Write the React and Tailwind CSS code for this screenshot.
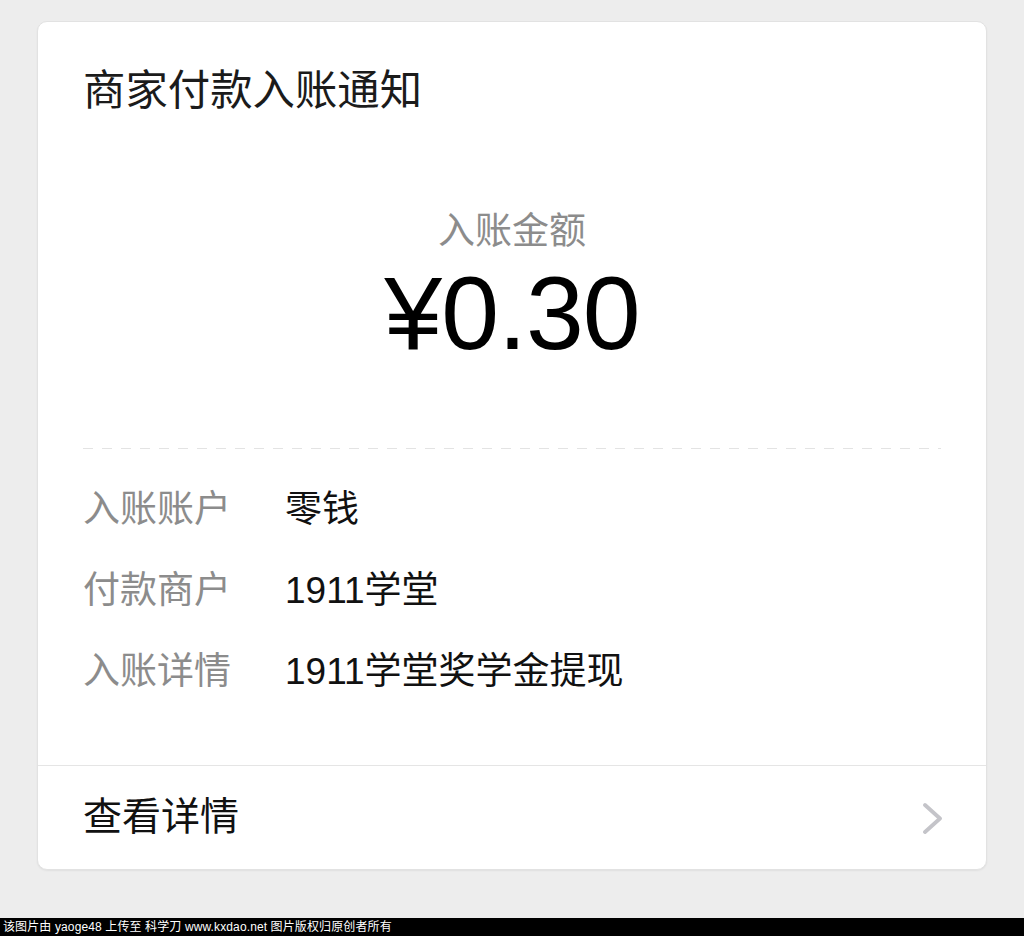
import React from 'react';

const CJK = { fontFamily: '"Liberation Sans", "Noto Sans CJK SC", sans-serif' };

const ROWS = [
  { label: '入账账户', value: '零钱' },
  { label: '付款商户', value: '1911学堂' },
  { label: '入账详情', value: '1911学堂奖学金提现' },
];

const App = () => {
  return (
    <div className="min-h-[936px] bg-[#ededed] flex flex-col" style={CJK}>
      {/* Notification card */}
      <div className="mx-[37px] mt-[21px] bg-white rounded-[10px] border border-[#e2e2e2] shadow-[0_1px_2px_rgba(0,0,0,0.06)]">
        <div className="px-[45px]">
          <h1 className="pt-[44px] text-[42.4px] leading-[50px] font-normal text-[#1b1b1b]">商家付款入账通知</h1>

          <div className="mt-[94px] flex flex-col items-center">
            <div className="text-[37px] leading-[44px] text-[#8c8c8c]">入账金额</div>
            <div className="mt-[4px] text-[104px] leading-[110px] text-black tracking-[-1px]">¥0.30</div>
          </div>

          <div className="mt-[80px] h-px w-full bg-[repeating-linear-gradient(to_right,#e3e3e3_0_10px,transparent_10px_19px)]"></div>

          <div className="pt-[20px] pb-[53px]">
            {ROWS.map((row) => (
              <div key={row.label} className="flex items-center h-[81px]">
                <span className="w-[202px] shrink-0 text-[37px] text-[#8c8c8c]">{row.label}</span>
                <span className="text-[37px] text-[#111]">{row.value}</span>
              </div>
            ))}
          </div>
        </div>

        <div className="border-t border-[#e5e5e5] h-[104px] flex items-center justify-between pl-[45px] pr-[42px]">
          <span className="text-[39px] text-[#111]">查看详情</span>
          <svg width="22" height="32" viewBox="0 0 22 32" fill="none">
            <polyline points="3,3 18,16.5 3,30" stroke="#c4c4c9" strokeWidth="3.8" strokeLinecap="round" strokeLinejoin="round" />
          </svg>
        </div>
      </div>

      {/* Watermark strip */}
      <div className="mt-auto h-[18px] bg-black flex items-center pl-[3px]">
        <span className="text-[12px] leading-[18px] text-white whitespace-pre tracking-[0.12px]">该图片由 yaoge48 上传至 科学刀 www.kxdao.net 图片版权归原创者所有</span>
      </div>
    </div>
  );
};

export default App;
